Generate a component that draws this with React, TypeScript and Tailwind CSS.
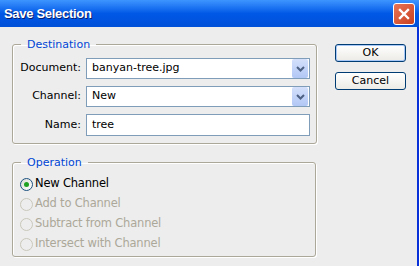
import { memo } from "react";

const ui = { fontFamily: '"DejaVu Sans", Verdana, sans-serif' };

function Chevron() {
  return (
    <svg width="9" height="6" viewBox="0 0 9 6">
      <path d="M1 1 L4.5 4.5 L8 1" fill="none" stroke="#4D6185" strokeWidth="2" />
    </svg>
  );
}

const Combo = memo(function Combo({ value }: { value: string }) {
  return (
    <div className="flex h-[21px] w-[224px] items-center border border-[#7F9DB9] bg-white pl-[5px]">
      <span className="flex-1 text-[11px] text-black">{value}</span>
      <span className="mr-px flex h-[19px] w-[16px] items-center justify-center rounded-[2px] bg-gradient-to-b from-[#D4E0FB] to-[#B2C7F5]">
        <Chevron />
      </span>
    </div>
  );
});

type Radio = { label: string; checked?: boolean; disabled?: boolean };

const RadioRow = memo(function RadioRow({ label, checked, disabled }: Radio) {
  return (
    <div className="flex h-[20px] items-center gap-[2px]">
      <span
        className={
          checked
            ? "flex h-[13px] w-[13px] items-center justify-center rounded-full border border-[#1C5180] bg-gradient-to-br from-[#DCDCD6] to-white"
            : "h-[13px] w-[13px] rounded-full border border-[#CAC8BB] bg-[#EDEDED]"
        }
      >
        {checked && <span className="h-[5px] w-[5px] rounded-full bg-[#21A121]" />}
      </span>
      <span className={"text-[11.5px] tracking-[-0.2px] " + (disabled ? "text-[#ACA899]" : "text-black")}>{label}</span>
    </div>
  );
});

export default function App() {
  return (
    <div className="flex h-[266px] w-[419px] flex-col overflow-hidden bg-[#EDEDED]" style={ui}>
      <div className="flex h-[27px] items-center justify-between bg-gradient-to-b from-[#3D95FF] via-[#0058E6] to-[#0050D8] pl-[4px] pr-[4px]">
        <span
          className="text-[13px] font-bold tracking-[-0.3px] text-white [text-shadow:1px_1px_0_#0A1E6E]"
          style={{ fontFamily: '"Liberation Sans", Arial, sans-serif' }}
        >
          Save Selection
        </span>
        <span className="flex h-[22px] w-[22px] items-center justify-center rounded-[3px] border border-white bg-gradient-to-br from-[#E87355] to-[#C8401E]">
          <svg width="12" height="12" viewBox="0 0 12 12">
            <path d="M2 2 L10 10 M10 2 L2 10" stroke="white" strokeWidth="2.4" strokeLinecap="square" />
          </svg>
        </span>
      </div>
      <div className="flex flex-1 border-r-[2px] border-[#0831D9]">
        <div className="flex w-[316px] flex-col pl-[12px] pt-[11px]">
          <fieldset className="rounded-[3px] border border-[#ACA899] px-[6px] pb-[7px] shadow-[inset_1px_1px_0_white,1px_1px_0_white]">
            <legend className="ml-[2px] px-[6px] text-[11px] leading-[13px] text-[#0046D5]">Destination</legend>
            <div className="mt-[7px] flex flex-col gap-[7px]">
              <div className="flex items-center gap-[5px]">
                <span className="w-[62px] text-right text-[11px] text-black">Document:</span>
                <Combo value="banyan-tree.jpg" />
              </div>
              <div className="flex items-center gap-[5px]">
                <span className="w-[62px] text-right text-[11px] text-black">Channel:</span>
                <Combo value="New" />
              </div>
              <div className="flex items-center gap-[5px]">
                <span className="w-[62px] text-right text-[11px] text-black">Name:</span>
                <div className="flex h-[22px] w-[224px] items-center border border-[#7F9DB9] bg-white pl-[5px] text-[11px] text-black">
                  tree
                </div>
              </div>
            </div>
          </fieldset>
          <fieldset className="mt-[12px] rounded-[3px] border border-[#ACA899] px-[7px] pb-[2px] shadow-[inset_1px_1px_0_white,1px_1px_0_white]">
            <legend className="ml-[1px] px-[6px] text-[11px] leading-[13px] text-[#0046D5]">Operation</legend>
            <div className="mt-[5px] flex flex-col">
              <RadioRow label="New Channel" checked />
              <RadioRow label="Add to Channel" disabled />
              <RadioRow label="Subtract from Channel" disabled />
              <RadioRow label="Intersect with Channel" disabled />
            </div>
          </fieldset>
        </div>
        <div className="flex flex-col gap-[10px] pl-[19px] pt-[17px]">
          <button className="h-[18px] w-[71px] rounded-[3px] border border-[#003C74] bg-gradient-to-b from-white to-[#ECEBE6] text-[11px] text-black shadow-[inset_0_0_0_1px_#A8C8F8]">
            OK
          </button>
          <button className="h-[18px] w-[71px] rounded-[3px] border border-[#003C74] bg-gradient-to-b from-white to-[#ECEBE6] text-[11px] text-black">
            Cancel
          </button>
        </div>
      </div>
    </div>
  );
}
